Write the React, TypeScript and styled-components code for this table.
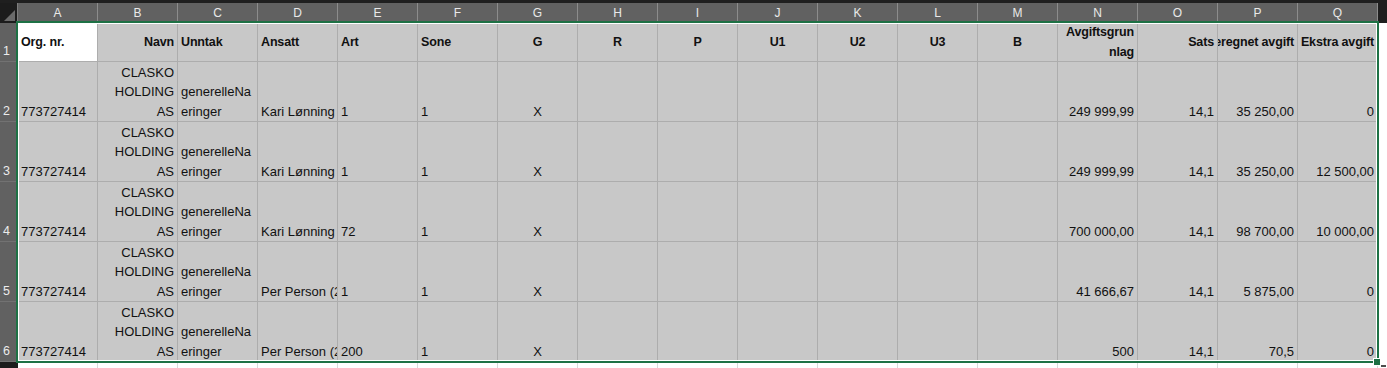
import styled, { createGlobalStyle, css } from "styled-components";

const GlobalStyle = createGlobalStyle`
  html, body {
    margin: 0;
    background: #ffffff;
  }
  body {
    font-family: "Liberation Sans", Arial, sans-serif;
    color: #111111;
  }
`;

type HAlign = "left" | "center" | "right";
type WrapMode = "none" | "word" | "char";

type CellData = {
  v?: string;
  align?: HAlign;
  wrap?: WrapMode;
};

const COLUMNS = "ABCDEFGHIJKLMNOPQ".split("");
const NB = "\u00a0";

const header: CellData[] = [
  { v: "Org. nr." },
  { v: "Navn", align: "right" },
  { v: "Unntak" },
  { v: "Ansatt" },
  { v: "Art" },
  { v: "Sone" },
  { v: "G", align: "center" },
  { v: "R", align: "center" },
  { v: "P", align: "center" },
  { v: "U1", align: "center" },
  { v: "U2", align: "center" },
  { v: "U3", align: "center" },
  { v: "B", align: "center" },
  { v: "Avgiftsgrunnlag", align: "right", wrap: "char" },
  { v: "Sats", align: "right" },
  { v: "Beregnet avgift", align: "right" },
  { v: "Ekstra avgift", align: "right" },
];

type Entry = {
  ansatt: string;
  art: string;
  grunnlag: string;
  avgift: string;
  ekstra: string;
};

const entries: Entry[] = [
  { ansatt: "Kari Lønning", art: "1", grunnlag: `249${NB}999,99`, avgift: `35${NB}250,00`, ekstra: "0" },
  { ansatt: "Kari Lønning", art: "1", grunnlag: `249${NB}999,99`, avgift: `35${NB}250,00`, ekstra: `12${NB}500,00` },
  { ansatt: "Kari Lønning", art: "72", grunnlag: `700${NB}000,00`, avgift: `98${NB}700,00`, ekstra: `10${NB}000,00` },
  { ansatt: "Per Person (2001)", art: "1", grunnlag: `41${NB}666,67`, avgift: `5${NB}875,00`, ekstra: "0" },
  { ansatt: "Per Person (2001)", art: "200", grunnlag: "500", avgift: "70,5", ekstra: "0" },
];

const toRow = (e: Entry): CellData[] => [
  { v: "773727414" },
  { v: "CLASKO HOLDING AS", align: "right", wrap: "word" },
  { v: "generelleNaeringer", wrap: "char" },
  { v: e.ansatt },
  { v: e.art },
  { v: "1" },
  { v: "X", align: "center" },
  {},
  {},
  {},
  {},
  {},
  {},
  { v: e.grunnlag, align: "right" },
  { v: "14,1", align: "right" },
  { v: e.avgift, align: "right" },
  { v: e.ekstra, align: "right" },
];

const justify = { left: "flex-start", center: "center", right: "flex-end" };

const Sheet = styled.div`
  position: relative;
  width: 1387px;
  height: 368px;
  overflow: hidden;
  display: flex;
  flex-direction: column;
  background: #ffffff;
`;

const TopStrip = styled.div`
  flex: none;
  height: 3px;
  background: #1f1f1f;
`;

const Row = styled.div<{ $h: number }>`
  flex: none;
  display: flex;
  height: ${(p) => p.$h}px;
`;

const Corner = styled.div`
  flex: none;
  width: 18px;
  box-sizing: border-box;
  background: #1c1c1c;
  border-right: 1px solid #7d7d7d;
  display: flex;
  align-items: flex-end;
  justify-content: flex-end;
  padding: 0 2px 2px 0;
`;

const ColHead = styled.div`
  flex: none;
  width: 80px;
  box-sizing: border-box;
  background: #616161;
  border-right: 1px solid #8c8c8c;
  color: #e9e9e9;
  font-size: 12px;
  display: flex;
  align-items: center;
  justify-content: center;
`;

const HeadFill = styled.div`
  flex: 1;
  background: #1f1f1f;
`;

const RowHead = styled.div<{ $dark?: boolean }>`
  flex: none;
  width: 18px;
  box-sizing: border-box;
  background: ${(p) => (p.$dark ? "#1c1c1c" : "#616161")};
  border-bottom: 1px solid #727272;
  color: #ececec;
  font-size: 12.5px;
  line-height: 19px;
  padding-left: 3px;
  display: flex;
  align-items: flex-end;
`;

const Cell = styled.div<{ $align: HAlign; $middle?: boolean; $active?: boolean; $blank?: boolean }>`
  flex: none;
  width: 80px;
  box-sizing: border-box;
  padding: 0 3px;
  overflow: hidden;
  display: flex;
  justify-content: ${(p) => justify[p.$align]};
  align-items: ${(p) => (p.$middle ? "center" : "flex-end")};
  border-right: 1px solid ${(p) => (p.$blank ? "#dadada" : "#adadad")};
  border-bottom: 1px solid #adadad;
  background: ${(p) => (p.$active || p.$blank ? "#ffffff" : "#c8c8c8")};
  font-size: 13px;
  line-height: 19.5px;
`;

const CellText = styled.span<{ $align: HAlign; $wrap: WrapMode; $bold?: boolean }>`
  flex: none;
  text-align: ${(p) => p.$align};
  ${(p) =>
    p.$bold &&
    css`
      font-weight: 700;
      font-size: 12.5px;
      letter-spacing: -0.15px;
      line-height: 20px;
    `}
  ${(p) =>
    p.$wrap === "none"
      ? css`
          white-space: nowrap;
        `
      : css`
          flex: 0 1 auto;
          max-width: 100%;
          white-space: normal;
          word-break: ${p.$wrap === "char" ? "break-all" : "normal"};
        `}
`;

const RowFill = styled.div`
  flex: 1;
  background: #ffffff;
`;

const Selection = styled.div`
  position: absolute;
  left: 16px;
  top: 21px;
  width: 1363px;
  height: 342px;
  box-sizing: border-box;
  border: 2px solid #1e7145;
  box-shadow: inset 0 0 0 1px #ffffff;
  pointer-events: none;
`;

const FillHandle = styled.div`
  position: absolute;
  left: 1373px;
  top: 358px;
  width: 6px;
  height: 6px;
  background: #1e7145;
  border: 1px solid #ffffff;
`;

const QuickMark = styled.div`
  position: absolute;
  left: 1381px;
  top: 365px;
  width: 5px;
  height: 2px;
  background: #4d4d4d;
`;

function SheetRow({ num, h, cells, head }: { num: number; h: number; cells: CellData[]; head?: boolean }) {
  return (
    <Row $h={h}>
      <RowHead>{num}</RowHead>
      {cells.map((c, i) => {
        const align = c.align ?? "left";
        return (
          <Cell key={i} $align={align} $middle={head} $active={head && i === 0}>
            {c.v && (
              <CellText $align={align} $wrap={c.wrap ?? "none"} $bold={head}>
                {c.v}
              </CellText>
            )}
          </Cell>
        );
      })}
      <RowFill />
    </Row>
  );
}

export default function App() {
  return (
    <>
      <GlobalStyle />
      <Sheet>
        <TopStrip />
        <Row $h={20}>
          <Corner>
            <svg width="11" height="11" viewBox="0 0 11 11">
              <polygon points="11,0 11,11 0,11" fill="#6a6a6a" />
            </svg>
          </Corner>
          {COLUMNS.map((c) => (
            <ColHead key={c}>{c}</ColHead>
          ))}
          <HeadFill />
        </Row>
        <SheetRow num={1} h={39} cells={header} head />
        {entries.map((e, i) => (
          <SheetRow key={i} num={i + 2} h={60} cells={toRow(e)} />
        ))}
        <Row $h={10}>
          <RowHead $dark />
          {COLUMNS.map((c) => (
            <Cell key={c} $align="left" $blank />
          ))}
          <RowFill />
        </Row>
        <Selection />
        <FillHandle />
        <QuickMark />
      </Sheet>
    </>
  );
}
